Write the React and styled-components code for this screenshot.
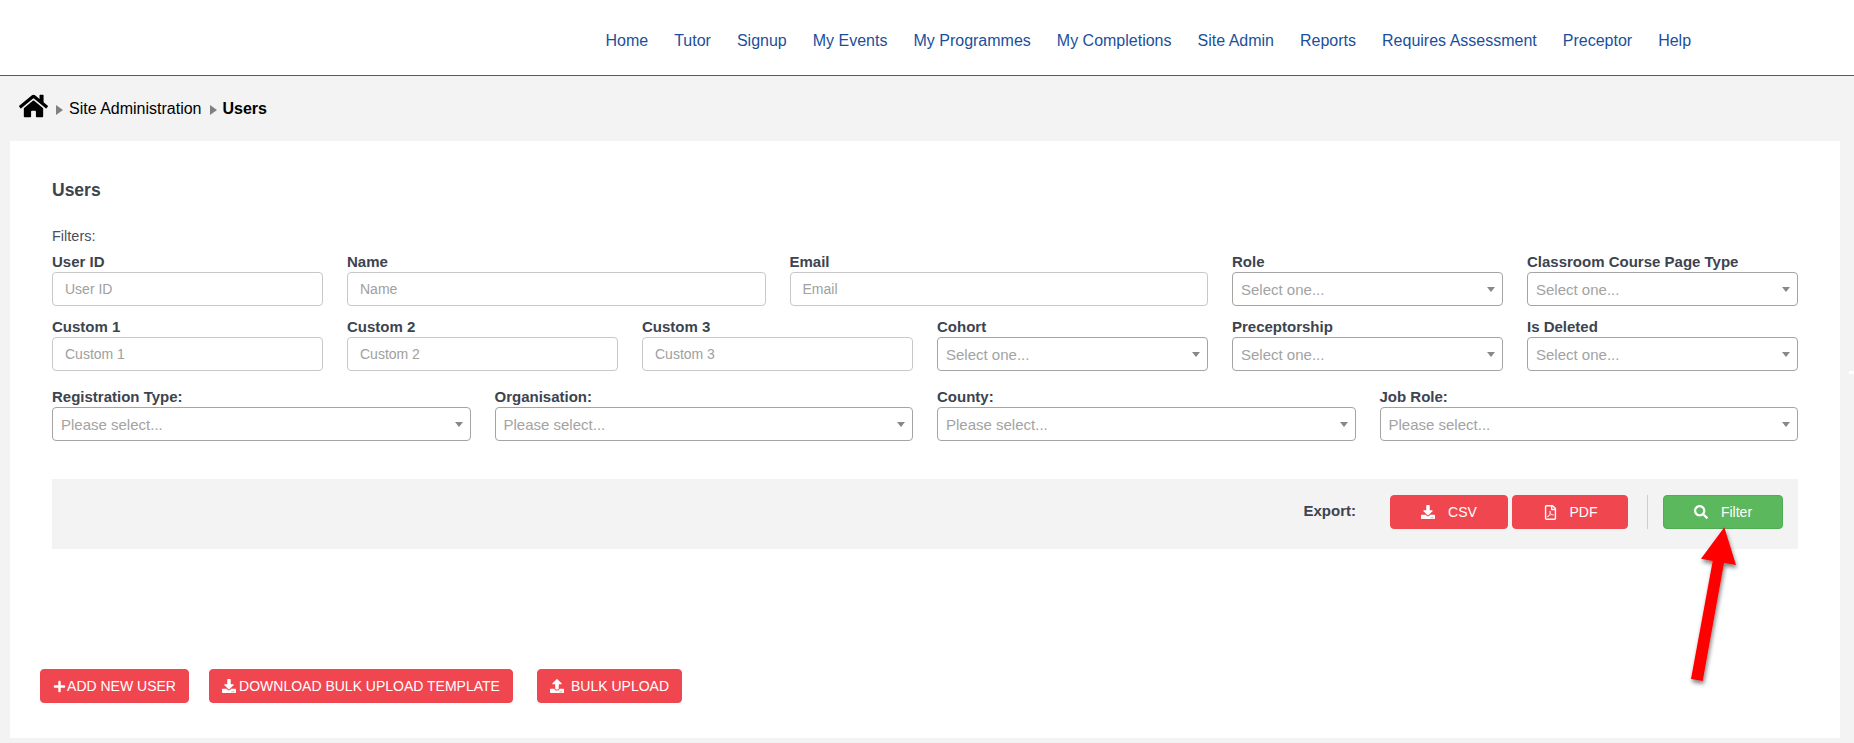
import React from "react";
import styled, { createGlobalStyle } from "styled-components";
import { FaHome, FaPlus, FaDownload, FaUpload, FaRegFilePdf, FaSearch } from "react-icons/fa";

const Global = createGlobalStyle`
  html, body { margin: 0; padding: 0; background: #f3f3f3; height: 743px; overflow: hidden; }
  body { font-family: "Liberation Sans", Arial, sans-serif; }
  * { box-sizing: border-box; }
`;

const Page = styled.div`
  position: relative;
  width: 1854px;
  height: 743px;
  overflow: hidden;
`;

const Header = styled.header`
  height: 76px;
  background: #fff;
  border-bottom: 1.5px solid #2a62b0;
  display: flex;
  align-items: center;
  padding: 6px 0 0 605.5px;
  gap: 26px;
`;

const NavLink = styled.a`
  color: #1b4f9c;
  font-size: 16px;
  line-height: 20px;
  text-decoration: none;
  white-space: nowrap;
`;

const Crumbs = styled.nav`
  height: 65px;
  display: flex;
  align-items: center;
  padding: 0 0 0 19px;
  color: #000;
  font-size: 16px;
`;

const HomeIcon = styled(FaHome)`
  width: 29px;
  height: 26px;
  margin: -5px 8px 0 0;
  color: #000;
`;

const Caret = styled.span`
  width: 0;
  height: 0;
  border-style: solid;
  border-width: 5px 0 5px 7px;
  border-color: transparent transparent transparent #808080;
  margin: ${p => p.$m || "2px 6px 0 0"};
`;

const Strong = styled.strong`
  font-weight: 700;
`;

const Card = styled.main`
  margin: 0 14px 0 10px;
  height: 597px;
  background: #fff;
  padding: 39px 42px 0;
`;

const Title = styled.h1`
  margin: 0 0 26px;
  font-size: 17.5px;
  line-height: 20px;
  font-weight: 700;
  color: #3c4450;
`;

const FiltersLabel = styled.div`
  font-size: 14.5px;
  line-height: 20px;
  color: #4a5058;
  margin-bottom: 6px;
`;

const FieldGrid = styled.div`
  display: grid;
  grid-template-columns: repeat(12, 1fr);
  column-gap: 24px;
  row-gap: 11px;
  margin-bottom: ${p => p.$mb || 11}px;
`;

const Field = styled.div`
  grid-column: span ${p => p.$span};
  min-width: 0;
`;

const Label = styled.label`
  display: block;
  height: 18px;
  margin-bottom: 2px;
  padding-top: 1px;
  font-size: 15px;
  line-height: 18px;
  font-weight: 700;
  color: #3c4450;
  white-space: nowrap;
`;

const TextInput = styled.input`
  display: block;
  width: 100%;
  height: 34px;
  border: 1px solid #c8c8c8;
  border-radius: 4px;
  padding: 0 12px;
  font: 14px "Liberation Sans", Arial, sans-serif;
  background: #fff;
  &::placeholder { color: #a0a0a0; opacity: 1; }
`;

const SelectWrap = styled.div`
  position: relative;
  &::after {
    content: "";
    position: absolute;
    right: 8px;
    top: 15px;
    border-style: solid;
    border-width: 5px 4px 0;
    border-color: #888 transparent transparent;
  }
`;

const Select = styled.select`
  display: block;
  width: 100%;
  height: 34px;
  border: 1px solid #a4a4a4;
  border-radius: 4px;
  padding: 1px 8px 0;
  appearance: none;
  background: #fff;
  color: #a3a3a3;
  font: 15px "Liberation Sans", Arial, sans-serif;
`;

const ExportBar = styled.section`
  margin-top: 38px;
  height: 70px;
  background: #f3f3f3;
  display: flex;
  align-items: flex-start;
  justify-content: flex-end;
  padding: 16px 15px 0 0;
`;

const ExportLabel = styled.span`
  font-size: 15px;
  font-weight: 700;
  line-height: 18px;
  margin: 7px 34px 0 0;
  color: #3c4450;
`;

const Button = styled.button`
  width: ${p => p.$w}px;
  height: 34px;
  margin-left: ${p => p.$ml || 0}px;
  border: 1px solid ${p => (p.$green ? "#4fae55" : "#f04650")};
  border-radius: 4px;
  background: ${p => (p.$green ? "#5cb85c" : "#f04650")};
  color: #fff;
  font: 14px "Liberation Sans", Arial, sans-serif;
  display: inline-flex;
  align-items: center;
  justify-content: center;
  gap: ${p => p.$gap ?? 3}px;
  padding: 0;
  white-space: nowrap;
  svg { flex: none; }
`;

const Divider = styled.span`
  width: 1px;
  height: 34px;
  background: #cfcfcf;
  margin: 0 15px 0 19px;
`;

const ActionRow = styled.div`
  margin: 120px 0 0 -12px;
  display: flex;
`;

const Arrow = styled.svg`
  position: absolute;
  left: 1670px;
  top: 510px;
  overflow: visible;
  pointer-events: none;
`;

const EdgeTick = styled.span`
  position: absolute;
  right: 0;
  top: 371px;
  width: 5px;
  height: 3px;
  background: #fff;
`;

const nav = ["Home", "Tutor", "Signup", "My Events", "My Programmes", "My Completions", "Site Admin", "Reports", "Requires Assessment", "Preceptor", "Help"];

const rowOne = [
  { label: "User ID", span: 2, ph: "User ID" },
  { label: "Name", span: 3, ph: "Name" },
  { label: "Email", span: 3, ph: "Email" },
  { label: "Role", span: 2, select: "Select one..." },
  { label: "Classroom Course Page Type", span: 2, select: "Select one..." },
];
const rowTwo = [
  { label: "Custom 1", span: 2, ph: "Custom 1" },
  { label: "Custom 2", span: 2, ph: "Custom 2" },
  { label: "Custom 3", span: 2, ph: "Custom 3" },
  { label: "Cohort", span: 2, select: "Select one..." },
  { label: "Preceptorship", span: 2, select: "Select one..." },
  { label: "Is Deleted", span: 2, select: "Select one..." },
];
const rowThree = ["Registration Type:", "Organisation:", "County:", "Job Role:"].map(label => ({
  label, span: 3, select: "Please select...",
}));

function Row({ items, mb }) {
  return (
    <FieldGrid $mb={mb}>
      {items.map(f => (
        <Field key={f.label} $span={f.span}>
          <Label>{f.label}</Label>
          {f.select ? (
            <SelectWrap>
              <Select defaultValue="">
                <option value="">{f.select}</option>
              </Select>
            </SelectWrap>
          ) : (
            <TextInput placeholder={f.ph} />
          )}
        </Field>
      ))}
    </FieldGrid>
  );
}

export default function App() {
  return (
    <Page>
      <Global />
      <Header>
        {nav.map(n => <NavLink key={n} href="#">{n}</NavLink>)}
      </Header>
      <Crumbs>
        <HomeIcon />
        <Caret />
        <span>Site Administration</span>
        <Caret $m="2px 6px 0 8px" />
        <Strong>Users</Strong>
      </Crumbs>
      <Card>
        <Title>Users</Title>
        <FiltersLabel>Filters:</FiltersLabel>
        <Row items={rowOne} />
        <Row items={rowTwo} mb={16} />
        <Row items={rowThree} mb={0} />
        <ExportBar>
          <ExportLabel>Export:</ExportLabel>
          <Button $w={118} $gap={13}><FaDownload size={14} />CSV</Button>
          <Button $w={116} $ml={4} $gap={12}><FaRegFilePdf size={15} />PDF</Button>
          <Divider />
          <Button $w={120} $green $gap={13}><FaSearch size={14} />Filter</Button>
        </ExportBar>
        <ActionRow>
          <Button $w={149} $gap={1}><FaPlus size={13} />ADD NEW USER</Button>
          <Button $w={304} $ml={20}><FaDownload size={14} />DOWNLOAD BULK UPLOAD TEMPLATE</Button>
          <Button $w={145} $ml={24} $gap={7}><FaUpload size={14} />BULK UPLOAD</Button>
        </ActionRow>
      </Card>
      <Arrow width="80" height="180" viewBox="1670 510 80 180">
        <defs>
          <filter id="arrowShadow" x="-30%" y="-10%" width="170%" height="125%">
            <feDropShadow dx="1" dy="3" stdDeviation="2.2" floodColor="#000" floodOpacity="0.5" />
          </filter>
        </defs>
        <polygon
          points="1724.3,527.3 1736,565 1724,563 1702.7,681 1691,679 1712.7,561 1701,558.7"
          fill="#ff0000"
          filter="url(#arrowShadow)"
        />
      </Arrow>
      <EdgeTick />
    </Page>
  );
}
